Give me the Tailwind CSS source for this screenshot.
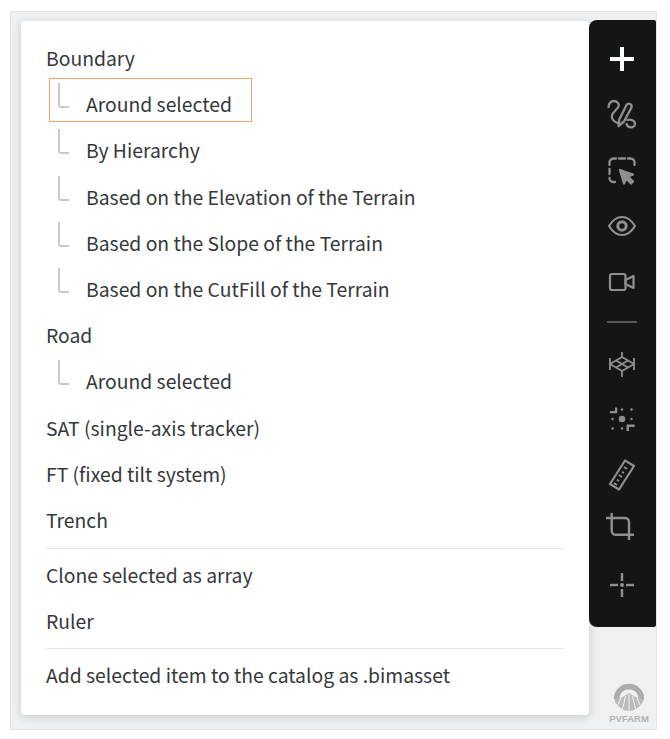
<!doctype html>
<html>
<head>
<meta charset="utf-8">
<script src="https://cdn.jsdelivr.net/npm/@tailwindcss/browser@4"></script>
</head>
<body class="bg-white font-['Noto_Sans_CJK_SC','Noto_Sans',sans-serif]">
<div class="w-[670px] h-[739px] bg-white pt-[11px] pl-[10px] overflow-hidden">
  <div class="relative w-[647px] h-[719px] bg-[#eef0f2] border border-[#e2e4e6] pl-[10px] pt-[9px]">
    <div class="flex items-start">
      <div class="w-[568px] h-[694px] bg-white rounded-[4px] shadow-[0_2px_10px_rgba(0,0,0,0.16)] pt-[14px] px-[25px] text-[19.33px] leading-[46.2px] text-[#35383b]">
        <div class="h-[46.2px]">Boundary</div>
        <div class="relative h-[46.2px] pl-[40px]">
          <div class="absolute left-[3px] top-[-3px] w-[203px] h-[44px] border border-[#f5a070]"></div>
          <div class="absolute left-[12px] top-[2px] w-[11px] h-[25px] border-l-2 border-b-2 border-[#c3cad0] rounded-bl-[3px]"></div>
          Around selected
        </div>
        <div class="relative h-[46.2px] pl-[40px]">
          <div class="absolute left-[12px] top-[2px] w-[11px] h-[25px] border-l-2 border-b-2 border-[#c3cad0] rounded-bl-[3px]"></div>
          By Hierarchy
        </div>
        <div class="relative h-[46.2px] pl-[40px]">
          <div class="absolute left-[12px] top-[2px] w-[11px] h-[25px] border-l-2 border-b-2 border-[#c3cad0] rounded-bl-[3px]"></div>
          Based on the Elevation of the Terrain
        </div>
        <div class="relative h-[46.2px] pl-[40px]">
          <div class="absolute left-[12px] top-[2px] w-[11px] h-[25px] border-l-2 border-b-2 border-[#c3cad0] rounded-bl-[3px]"></div>
          Based on the Slope of the Terrain
        </div>
        <div class="relative h-[46.2px] pl-[40px]">
          <div class="absolute left-[12px] top-[2px] w-[11px] h-[25px] border-l-2 border-b-2 border-[#c3cad0] rounded-bl-[3px]"></div>
          Based on the CutFill of the Terrain
        </div>
        <div class="h-[46.2px]">Road</div>
        <div class="relative h-[46.2px] pl-[40px]">
          <div class="absolute left-[12px] top-[2px] w-[11px] h-[25px] border-l-2 border-b-2 border-[#c3cad0] rounded-bl-[3px]"></div>
          Around selected
        </div>
        <div class="h-[46.2px]">SAT (single-axis tracker)</div>
        <div class="h-[46.2px]">FT (fixed tilt system)</div>
        <div class="h-[46.2px]">Trench</div>
        <div class="h-px bg-[#e4e6e8] mt-[5px] mb-[3px] w-[518px]"></div>
        <div class="h-[46.2px]">Clone selected as array</div>
        <div class="h-[46.2px]">Ruler</div>
        <div class="h-px bg-[#e4e6e8] mt-[4px] mb-[3px] w-[518px]"></div>
        <div class="h-[46.2px]">Add selected item to the catalog as .bimasset</div>
      </div>
      <div class="w-[68px] h-[607px] -mt-px pr-px bg-[#131517] rounded-r-[2px] rounded-tl-[8px] rounded-bl-[8px] flex flex-col items-center text-[#8e8f90]">
        <svg class="mt-[24px] text-white" width="30" height="30" viewBox="0 0 30 30" fill="none" stroke="currentColor" stroke-width="4"><path d="M15 3v24M3 15h24"/></svg>
        <svg class="mt-[25px]" width="30" height="30" viewBox="0 0 30 30" fill="none" stroke="currentColor" stroke-width="2.3" stroke-linecap="round" stroke-linejoin="round"><path d="M1.500 8C2 4 4.500 2 7 2s5 2 4.800 4.500C11.500 9.500 6 12.500 5 16.500c-.6 3 2 6 5.500 7.500"/><path d="M11.500 27l.8-6.500L19.500 6a2.800 2.800 0 0 1 5 2.400L17 22.500z"/><path d="M20.500 21c3-1 7.500.5 7.500 3.500 0 2.500-2 3.800-4 3.800-2 0-3.800-1.300-4.500-3.300"/></svg>
        <svg class="mt-[27px]" width="30" height="30" viewBox="0 0 30 30" fill="none" stroke="currentColor" stroke-width="2.3" stroke-linecap="round" stroke-linejoin="round"><path d="M2.500 9V6.500a4 4 0 0 1 4-4H9M12 2.500h6M21 2.500h2.500a4 4 0 0 1 4 4V9M2.500 13v5M2.500 22a4 4 0 0 0 4 4H8"/><path d="M13 14l13 4.500-5 2 5 5-2 2-5-5-2 5z" fill="currentColor"/></svg>
        <svg class="mt-[25px]" width="30" height="30" viewBox="0 0 30 30" fill="none" stroke="currentColor" stroke-width="2.2"><path d="M2 15C6 8.500 10 6 15 6s9 2.500 13 9c-4 6.500-8 9-13 9S6 21.500 2 15z"/><circle cx="15" cy="15" r="4.200" stroke-width="3"/></svg>
        <svg class="mt-[26px]" width="30" height="30" viewBox="0 0 30 30" fill="none" stroke="currentColor" stroke-width="2.2" stroke-linejoin="round"><rect x="3" y="7" width="15.500" height="16" rx="2"/><path d="M18.500 13l8-4v12l-8-4z"/></svg>
        <div class="mt-[24px] w-[30px] h-[2px] bg-[#55575a]"></div>
        <svg class="mt-[26px]" width="30" height="30" viewBox="0 0 30 30" fill="none" stroke="currentColor" stroke-width="1.800"><path d="M15 3v6M15 21v7M3 9v12M27 9v12M3 15l12-7 12 7-12 7z"/><path d="M9 11.500l12 7M21 11.500l-12 7"/></svg>
        <svg class="mt-[25px]" width="30" height="30" viewBox="0 0 30 30" fill="currentColor"><path d="M3 7h5V3.500h2.200V9.200H3zM27.700 23H22v4h-2.500v-6.500h8.200z"/><circle cx="15" cy="15" r="3.300"/><circle cx="15" cy="5.500" r="1.200"/><circle cx="24.500" cy="5.500" r="1.200"/><circle cx="5.500" cy="15" r="1.200"/><circle cx="24.500" cy="15" r="1.200"/><circle cx="5.500" cy="24.500" r="1.200"/><circle cx="15" cy="24.500" r="1.200"/></svg>
        <svg class="mt-[25px]" width="30" height="32" viewBox="0 0 30 32" fill="none" stroke="currentColor" stroke-width="2.200" stroke-linejoin="round"><path d="M18 1.500l9 5.500L12 30.500l-9-5.500z"/><path d="M20 10l-3-2M17 14l-2-1.300M15 18l-3-2M12 22l-2-1.300M10 26l-3-2" stroke-width="1.800"/></svg>
        <svg class="mt-[20px] overflow-visible" width="30" height="30" viewBox="0 0 30 30" fill="none" stroke="currentColor" stroke-width="2.400" stroke-linejoin="round"><path d="M4.700 2v17.700a4 4 0 0 0 4 4H27"/><path d="M-1 7h19a4 4 0 0 1 4 4v18"/></svg>
        <svg class="mt-[29px]" width="30" height="30" viewBox="0 0 30 30" fill="currentColor"><rect x="13.800" y="3" width="2.400" height="8"/><rect x="13.800" y="19" width="2.400" height="8"/><rect x="3" y="13.800" width="8" height="2.400"/><rect x="19" y="13.800" width="8" height="2.400"/><circle cx="15" cy="15" r="2"/></svg>
      </div>
    </div>
    <div class="absolute left-[596px] top-[670px] w-[44px] flex flex-col items-center">
      <svg width="32" height="30" viewBox="0 0 32 30" fill="none" stroke="#a9adb0"><path d="M3.500 17A12.500 12.500 0 0 1 28.500 17" stroke-width="5.500"/><path d="M1 17c4 0 9-1.500 15-6 6 4.500 11 6 15 6-2 6-8 12-15 12S3 23 1 17z" fill="#b8bcbf" stroke="none"/><path d="M16 12v17M12.500 14l-3 13M19.500 14l3 13M8 16l-3 7M24 16l3 7" stroke="#eef0f2" stroke-width="1"/></svg>
      <div class="text-[9.5px] leading-[11px] mt-px font-bold text-[#b0b3b6] font-['Liberation_Sans',sans-serif]">PVFARM</div>
    </div>
  </div>
</div>
</body>
</html>
